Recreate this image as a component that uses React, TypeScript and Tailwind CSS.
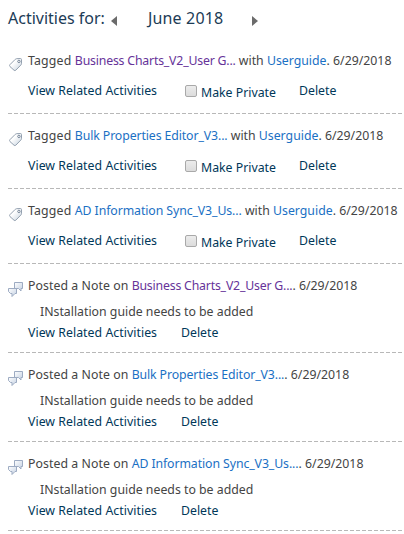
import { useState } from 'react'

interface Activity {
  id: number
  kind: 'tag' | 'note'
  title: string
  titleClass: string
  date: string
  tag?: string
  note?: string
}

const CHARTS = { title: 'Business Charts_V2_User G...', titleClass: 'text-[#663399] tracking-[-0.19px]' }
const EDITOR = { title: 'Bulk Properties Editor_V3...', titleClass: 'text-[#1a70c4] tracking-[-0.11px]' }
const SYNC = { title: 'AD Information Sync_V3_Us...', titleClass: 'text-[#1a70c4] tracking-[-0.09px]' }

const ACTIVITIES: Activity[] = [
  { id: 1, kind: 'tag', ...CHARTS, tag: 'Userguide', date: '6/29/2018' },
  { id: 2, kind: 'tag', ...EDITOR, tag: 'Userguide', date: '6/29/2018' },
  { id: 3, kind: 'tag', ...SYNC, tag: 'Userguide', date: '6/29/2018' },
  { id: 4, kind: 'note', ...CHARTS, note: 'INstallation guide needs to be added', date: '6/29/2018' },
  { id: 5, kind: 'note', ...EDITOR, note: 'INstallation guide needs to be added', date: '6/29/2018' },
  { id: 6, kind: 'note', ...SYNC, note: 'INstallation guide needs to be added', date: '6/29/2018' },
]

function TagIcon() {
  return (
    <svg width="16" height="16" viewBox="0 0 16 16" aria-hidden="true">
      <defs>
        <linearGradient id="tagFill" x1="0" y1="0" x2="1" y2="1">
          <stop offset="0.35" stopColor="#ffffff" />
          <stop offset="1" stopColor="#c6d2de" />
        </linearGradient>
      </defs>
      <path
        d="M7.2 2.4Q7.8 1.8 8.7 1.7L12.4 1.5Q13.5 1.5 13.5 2.6L13.5 6.6Q13.4 7.5 12.8 8.1L7.8 13.2Q6.9 14 6 13.2L2 9.6Q1.1 8.6 2 7.6Z"
        fill="url(#tagFill)"
        stroke="#94a1b0"
      />
      <circle cx="10.9" cy="4.4" r="1.2" fill="#fff" stroke="#66788d" strokeWidth="0.9" />
    </svg>
  )
}

function NoteIcon() {
  return (
    <svg width="16" height="16" viewBox="0 0 16 16" aria-hidden="true">
      <defs>
        <linearGradient id="noteFill" x1="0" y1="0" x2="1" y2="1">
          <stop offset="0" stopColor="#ffffff" />
          <stop offset="1" stopColor="#c3d0e2" />
        </linearGradient>
      </defs>
      <path d="M6.5.5h8v6h-1.5v2.5l-2.5-2.5h-4z" fill="url(#noteFill)" stroke="#9dabc2" />
      <path d="M.5 6.5h8v5h-1.5l-3 3v-3h-1.5l-2-2z" fill="url(#noteFill)" stroke="#9dabc2" />
    </svg>
  )
}

function ActivityItem({ activity }: { activity: Activity }) {
  const [isPrivate, setIsPrivate] = useState(false)
  const isTag = activity.kind === 'tag'

  return (
    <li className={isTag ? 'flex h-[75px] flex-col' : 'flex h-[89px] flex-col'}>
      <div className="flex h-[44px] shrink-0">
        <span className="w-5 shrink-0 pt-[18px]">{isTag ? <TagIcon /> : <NoteIcon />}</span>
        <p className="pt-[13px] leading-[18px] whitespace-nowrap text-[#444]">
          <span className={isTag ? 'tracking-[0.18px]' : 'tracking-[0.06px]'}>
            {isTag ? 'Tagged ' : 'Posted a Note on '}
          </span>
          <a href="#" className={activity.titleClass}>
            {activity.title}
          </a>
          {isTag ? (
            <>
              {' with '}
              <a href="#" className="text-[#1a70c4]">
                {activity.tag}
              </a>
            </>
          ) : null}
          {`. ${activity.date}`}
        </p>
      </div>

      {isTag ? (
        <div className="-mt-px flex h-[31px] shrink-0 pl-5 leading-[18px] whitespace-nowrap text-[#003759]">
          <a href="#" className="w-[157px] tracking-[0.04px]">View Related Activities</a>
          <label className="flex w-[114px] pt-[2px]">
            <input
              type="checkbox"
              checked={isPrivate}
              onChange={() => setIsPrivate((prev) => !prev)}
              className="mt-px mr-1 size-3 appearance-none rounded-[2px] border border-[#a9a9a9] bg-linear-to-b from-[#ececec] to-[#dcdcdc]"
            />
            Make Private
          </label>
          <a href="#">Delete</a>
        </div>
      ) : (
        <div className="-mt-[5px] h-[49px] shrink-0 pl-5 leading-[18px] whitespace-nowrap">
          <p className="h-[21px] pl-3 text-[#444]">{activity.note}</p>
          <div className="flex text-[#003759]">
            <a href="#" className="w-[153px] tracking-[0.04px]">View Related Activities</a>
            <a href="#">Delete</a>
          </div>
        </div>
      )}
      <hr className="h-px shrink-0 border-0 bg-[repeating-linear-gradient(90deg,#b8b8b8_0_4px,transparent_4px_6px)]" />
    </li>
  )
}

export default function App() {
  return (
    <main className="h-[534px] w-[404px] overflow-hidden bg-white pl-2 font-['Noto_Sans',sans-serif] text-[12.3px]">
      <header className="flex h-[39px] items-start pt-[7px] text-[16px] leading-[22px] whitespace-nowrap text-[#1c3c56]">
        <h1 className="w-[102px]">Activities for:</h1>
        <button type="button" aria-label="Previous month" className="w-[38px] pt-[9px]">
          <svg width="8" height="10" viewBox="0 0 8 10"><path d="M7 0v10L1 5z" fill="#6b6b6b" /></svg>
        </button>
        <span className="w-[103px] tracking-[0.15px]">June 2018</span>
        <button type="button" aria-label="Next month" className="w-5 pt-[9px]">
          <svg width="8" height="10" viewBox="0 0 8 10"><path d="M1 0v10l6-5z" fill="#6b6b6b" /></svg>
        </button>
      </header>
      <ul>
        {ACTIVITIES.map((activity) => (
          <ActivityItem key={activity.id} activity={activity} />
        ))}
      </ul>
    </main>
  )
}
